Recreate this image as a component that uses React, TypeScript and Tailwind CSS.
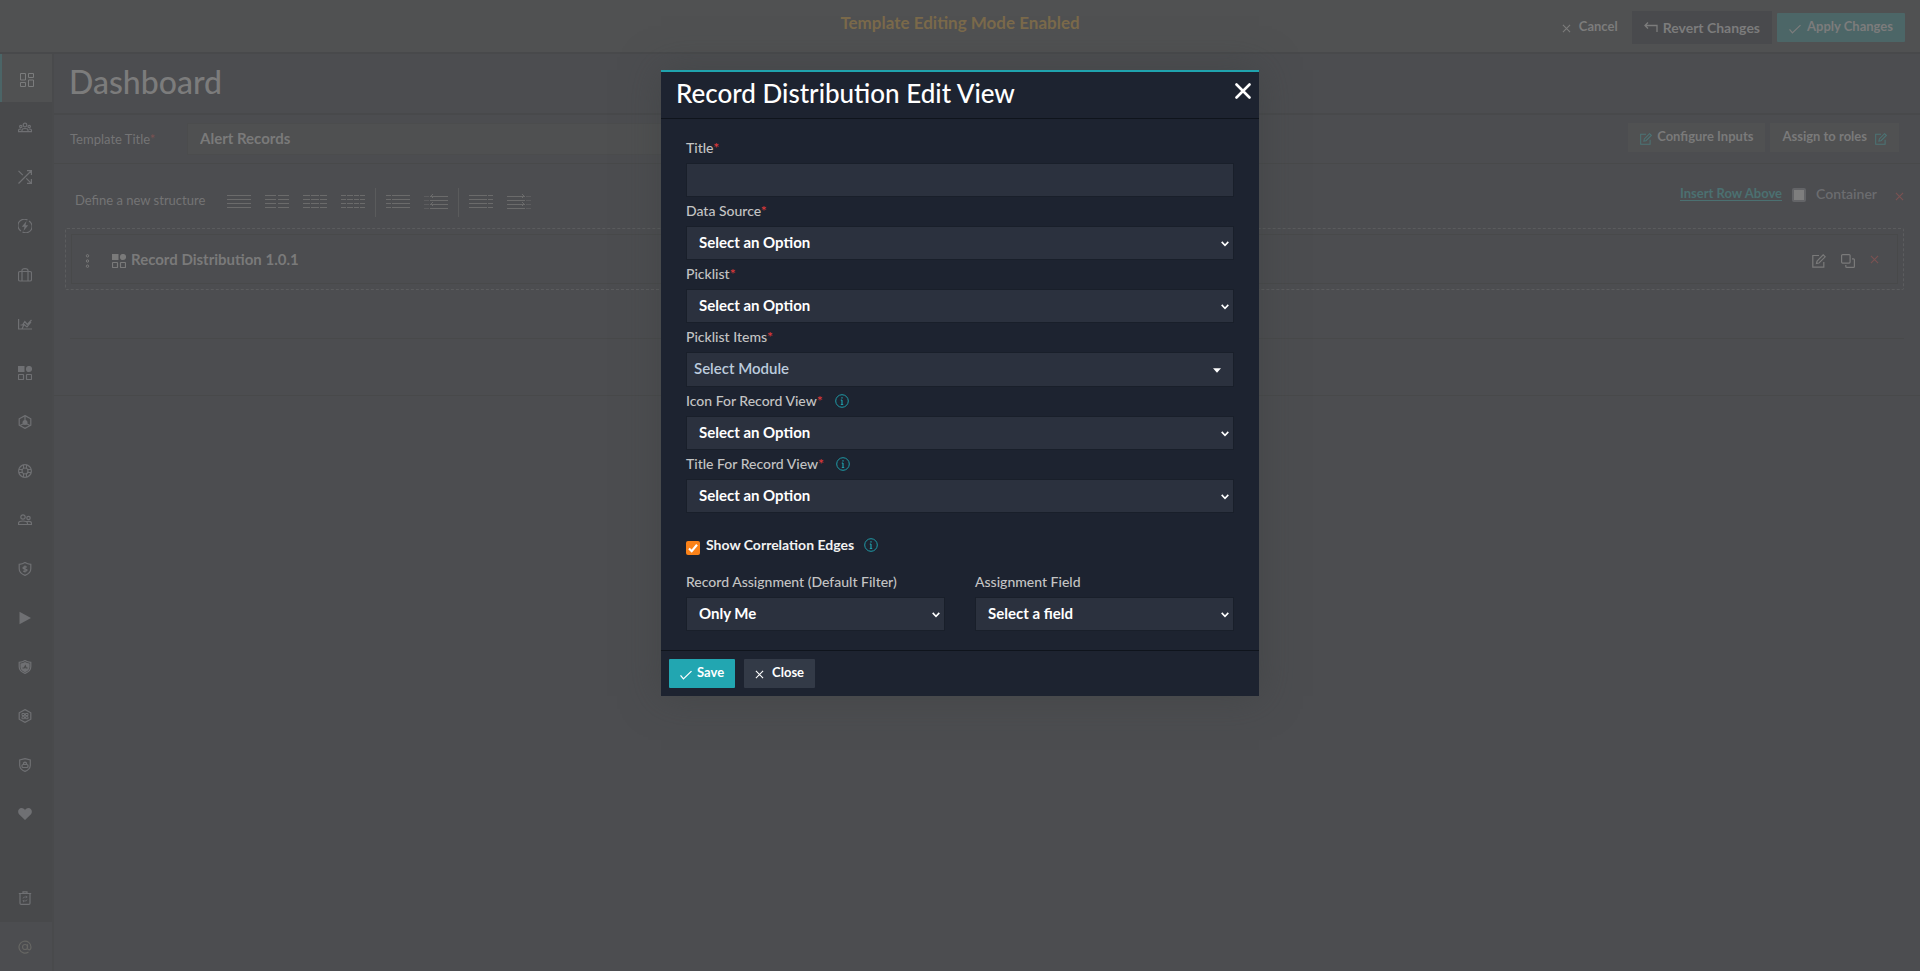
import type { ReactNode } from 'react';

type IconProps = { children: ReactNode; className?: string; size?: number; box?: number };

function Icon({ children, className = '', size = 14, box = 14 }: IconProps) {
  return (
    <svg
      width={size}
      height={size}
      viewBox={`0 0 ${box} ${box}`}
      fill="none"
      stroke="currentColor"
      strokeWidth="1.2"
      className={`shrink-0 ${className}`}
      aria-hidden="true"
    >
      {children}
    </svg>
  );
}

const hexagon = <path d="M7 .6 12.8 3.8v6.4L7 13.4 1.2 10.2V3.8Z" />;
const shield = <path d="M7 .6c1.7 1.1 3.6 1.7 5.8 1.8v4.4c0 3-2 5.2-5.8 6.6-3.8-1.4-5.8-3.6-5.8-6.6V2.400C3.400 2.300 5.300 1.700 7 .6Z" />;

const appsIcon = (
  <>
    <rect x="0" y="0" width="6.500" height="6" fill="currentColor" stroke="none" />
    <circle cx="11" cy="3" r="3.100" fill="currentColor" stroke="none" />
    <rect x=".5" y="8.500" width="5" height="5" rx=".5" />
    <rect x="8.500" y="8.500" width="5" height="5" rx=".5" />
  </>
);

const editIcon = (
  <>
    <path d="M7 1.500H.8v11.700h11V8" />
    <path d="m4.500 9.500.6-2.500L11.200.8l2 2L7 9Z" />
  </>
);

const crossIcon = <path d="m1 1 8 8M9 1 1 9" />;
const checkIcon = <path d="M.6 7.500 4 11.500 13.400 2.500" strokeWidth="1.500" />;

const navItems: { label: string; icon: ReactNode }[] = [
  {
    label: 'Teams',
    icon: (
      <>
        <circle cx="7" cy="4" r="1.800" />
        <circle cx="2.800" cy="5.500" r="1.200" />
        <circle cx="11.200" cy="5.500" r="1.200" />
        <path d="M4 10.500V9q0-1.500 3-1.500T10 9v1.500M.5 10.500V9.300q0-1.300 2.500-1.300M13.500 10.500V9.300q0-1.300-2.500-1.300M0 10.700h14" />
      </>
    ),
  },
  { label: 'Workflows', icon: <path d="M.5 13.500 13.300.8M9 .6h4.400V5M.5.8l4.300 4.300M8.300 8.300l5 5M9 13.400h4.400V9" /> },
  {
    label: 'Automation',
    icon: (
      <>
        <path d="M9.500 1.100A6.300 6.300 0 0 0 3 12M4.500 12.900A6.300 6.300 0 0 0 11 2" />
        <path d="M8.500 2 3.800 7.800h2.700L5.500 12 10.200 6.200H7.500Z" fill="currentColor" stroke="none" />
      </>
    ),
  },
  {
    label: 'Cases',
    icon: (
      <>
        <rect x=".5" y="3.500" width="13" height="9.500" rx="1.500" />
        <path d="M4 13V2.500Q4 .6 7 .6t3 1.900V13" />
      </>
    ),
  },
  { label: 'Reports', icon: <path d="M.6 2v10h13.400M2.500 8h2l2.300-3.500 2.500 3L13.500 3M4 12l2-4.500 3 2.500 4-5" /> },
  { label: 'Modules', icon: appsIcon },
  {
    label: 'Assets',
    icon: (
      <>
        {hexagon}
        <circle cx="7" cy="7.500" r="2.500" fill="currentColor" stroke="none" />
        <path d="M7 1v5M2 10.500l4-2M12 10.500l-4-2" />
      </>
    ),
  },
  {
    label: 'Help',
    icon: (
      <>
        <circle cx="7" cy="7" r="6.400" />
        <circle cx="7" cy="7" r="3" />
        <path strokeWidth="1" d="M5.500.8v3.500M8.500.8v3.500M5.500 13.200V9.700M8.500 13.200V9.700M.8 5.500h3.500M.8 8.500h3.500M13.200 5.500H9.700M13.200 8.500H9.700" />
      </>
    ),
  },
  {
    label: 'Users',
    icon: (
      <>
        <circle cx="5" cy="4" r="2.200" />
        <circle cx="10.500" cy="5" r="1.700" />
        <path d="M.5 11.500v-1Q.5 8 5 8t4.500 2.500v1ZM8.500 8.700q5-1 5 1.800v1h-4" />
      </>
    ),
  },
  {
    label: 'Billing',
    icon: (
      <>
        {shield}
        <path d="M8.800 5.200Q7 4 5.500 5.200T7 7t1.500 1.800T5.200 9M7 3.500v7" />
      </>
    ),
  },
  { label: 'Playbooks', icon: <path d="M1.500.8v12.400L13 7Z" fill="currentColor" stroke="none" /> },
  {
    label: 'Threats',
    icon: (
      <>
        {shield}
        <path d="M7 2c1.400.9 3 1.400 4.600 1.500v3.400c0 2.300-1.500 4-4.600 5.300-3.100-1.300-4.600-3-4.600-5.300V3.500C4 3.400 5.600 2.900 7 2Z" fill="currentColor" stroke="none" />
        <path d="M4.500 8h1.700L7.300 6l.8 2h1.500" stroke="#494a4b" />
      </>
    ),
  },
  {
    label: 'Queues',
    icon: (
      <>
        {hexagon}
        <path strokeWidth="1" d="M4 4.500h2.500v2H4ZM7.500 4.500H10v2H7.500ZM4 7.700h2.500v2H4ZM7.500 7.700H10v2H7.500Z" />
      </>
    ),
  },
  {
    label: 'Access',
    icon: (
      <>
        <path d="M7 .6 12.300 2v5.500Q12 11.500 7 13.400 2 11.500 1.700 7.500V2Z" />
        <rect x="4" y="6.500" width="6" height="3" rx="1" />
        <path d="M5.500 6.500V5Q7 3.500 8.500 5v1.500" />
      </>
    ),
  },
  {
    label: 'Favorites',
    icon: <path d="M7 13 1 7.200C-.8 5 .3 1 3.500 1 5.300 1 6.500 2 7 3.200 7.500 2 8.700 1 10.500 1c3.200 0 4.300 4 2.500 6.200Z" fill="currentColor" stroke="none" />,
  },
];

const structures: { label: string; lines: string; faint?: string; divider?: boolean }[] = [
  { label: 'One column', lines: 'M0 1h24M0 5h24M0 9h24M0 13h24' },
  { label: 'Two columns', lines: 'M0 1h11m2 0h11M0 5h11m2 0h11M0 9h11m2 0h11M0 13h11m2 0h11' },
  { label: 'Three columns', lines: 'M0 1h7m1 0h8m1 0h7M0 5h7m1 0h8m1 0h7M0 9h7m1 0h8m1 0h7M0 13h7m1 0h8m1 0h7' },
  { label: 'Four columns', lines: 'M0 1h5m1 0h6m1 0h5m1 0h5M0 5h5m1 0h6m1 0h5m1 0h5M0 9h5m1 0h6m1 0h5m1 0h5M0 13h5m1 0h6m1 0h5m1 0h5' },
  { label: 'Left sidebar', lines: 'M0 1h5m1 0h18M0 5h5m1 0h18M0 9h5m1 0h18M0 13h5m1 0h18', divider: true },
  { label: 'Collapsible left sidebar', lines: 'M6 2h18M6 6h18M6 10h18M6 14h18M9 0 7 2l2 2M9 8l-2 2 2 2', faint: 'M0 2h5M0 6h5M0 10h5M0 14h5' },
  { label: 'Right sidebar', lines: 'M0 1h18m1 0h5M0 5h18m1 0h5M0 9h18m1 0h5M0 13h18m1 0h5', divider: true },
  { label: 'Collapsible right sidebar', lines: 'M0 2h18M0 6h18M0 10h18M0 14h18M15 0l2 2-2 2M15 8l2 2-2 2', faint: 'M19 2h5M19 6h5M19 10h5M19 14h5' },
];

const fieldBox = 'w-full border border-[#191f2a] bg-[#2b313e] text-[15px] font-bold text-white';

function Required({ className = 'text-[#e63a3a]' }: { className?: string }) {
  return <span className={className}>*</span>;
}

function Info({ label }: { label: string }) {
  return (
    <button type="button" aria-label={label} className="flex text-[#1f9aa6]">
      <Icon>
        <circle cx="7" cy="7" r="6.300" strokeWidth="1" />
        <path d="M7 6v4.500M5.800 6.200H7M5.800 10.500h2.400" />
        <path d="M7 3.200v1.400" strokeWidth="1.400" />
      </Icon>
    </button>
  );
}

type SelectFieldProps = { id: string; label: string; value: string; required?: boolean; info?: boolean };

function SelectField({ id, label, value, required, info }: SelectFieldProps) {
  return (
    <div>
      <div className="flex h-[29px] items-center gap-3 pb-[2px]">
        <label htmlFor={id} className="text-sm font-medium text-[#c4c4c4]">
          {label}
          {required && <Required />}
        </label>
        {info && <Info label={`About ${label}`} />}
      </div>
      <div className="relative">
        <select id={id} className={`${fieldBox} block h-[34px] appearance-none pr-5 pb-[2px] pl-3`}>
          <option>{value}</option>
        </select>
        <svg
          width="8"
          height="6"
          viewBox="0 0 8 6"
          fill="none"
          stroke="currentColor"
          strokeWidth="1.6"
          className="pointer-events-none absolute top-[15px] right-[5px] text-white"
          aria-hidden="true"
        >
          <path d="m.7.900 3.300 3.500L7.300.900" />
        </svg>
      </div>
    </div>
  );
}

function Dialog() {
  return (
    <div className="absolute inset-x-0 top-[70px] z-10 flex justify-center">
      <form
        role="dialog"
        aria-labelledby="dialog-title"
        className="w-full max-w-[598px] border-t-2 border-[#1fa3ae] bg-[#1d2330] shadow-[0_0_36px_rgba(60,64,64,0.5)]"
      >
        <header className="flex h-[47px] items-start justify-between border-b border-[#0f141c] pt-[2px] pr-2 pl-[15px]">
          <h2 id="dialog-title" className="text-[26px] leading-[38px] font-medium text-white">
            Record Distribution Edit View
          </h2>
          <button type="button" aria-label="Close dialog" className="mt-[9px] text-white">
            <Icon size={16} box={16}>
              <path d="m1.500 1.500 13 13m0-13-13 13" strokeWidth="2.600" strokeLinecap="round" />
            </Icon>
          </button>
        </header>

        <div className="px-[25px] pt-[15px] pb-[19px]">
          <div>
            <div className="flex h-[29px] items-center pb-[2px]">
              <label htmlFor="title" className="text-sm font-medium text-[#c4c4c4]">
                Title
                <Required />
              </label>
            </div>
            <input id="title" type="text" className={`${fieldBox} block h-[34px] px-3 outline-none`} />
          </div>
          <SelectField id="data-source" label="Data Source" value="Select an Option" required />
          <SelectField id="picklist" label="Picklist" value="Select an Option" required />
          <div>
            <div className="flex h-[29px] items-center pb-[2px]">
              <label htmlFor="picklist-items" className="text-sm font-medium text-[#c4c4c4]">
                Picklist Items
                <Required />
              </label>
            </div>
            <button
              id="picklist-items"
              type="button"
              className="flex h-[35px] w-full items-center justify-between border border-[#191f2a] bg-[#2b313e] pr-3 pb-[3px] pl-[7px] text-[15px] font-semibold text-[#bccbdd]"
            >
              Select Module
              <svg width="8" height="5" viewBox="0 0 8 5" className="mt-1 text-white" aria-hidden="true">
                <path d="M0 .3h8L4 4.700Z" fill="currentColor" />
              </svg>
            </button>
          </div>
          <SelectField id="icon-view" label="Icon For Record View" value="Select an Option" required info />
          <SelectField id="title-view" label="Title For Record View" value="Select an Option" required info />

          <div className="mt-5 flex h-6 items-center">
            <label className="flex items-center text-sm font-bold text-[#f2f2f2]">
              <input type="checkbox" defaultChecked className="peer sr-only" />
              <span className="mt-[6px] mr-[6px] flex size-[14px] items-center justify-center rounded-[2px] bg-[#fa8219] text-white">
                <Icon size={10} box={10}>
                  <path d="m1 5.500 2.700 2.700L9 1.800" strokeWidth="2.200" />
                </Icon>
              </span>
              Show Correlation Edges
            </label>
            <span className="ml-[10px]">
              <Info label="About correlation edges" />
            </span>
          </div>

          <div className="mt-[11px] grid grid-cols-2 gap-[30px]">
            <SelectField id="assignment" label="Record Assignment (Default Filter)" value="Only Me" />
            <SelectField id="assignment-field" label="Assignment Field" value="Select a field" />
          </div>
        </div>

        <footer className="flex h-[46px] items-center gap-[9px] border-t border-[#0f141c] px-2">
          <button type="button" className="flex h-[29px] items-center gap-[5px] rounded-[1px] bg-[#22a6b1] px-[11px] pb-[2px] text-[13px] font-bold text-white">
            <Icon size={12} className="mt-1">{checkIcon}</Icon>
            Save
          </button>
          <button type="button" className="flex h-[29px] items-center gap-2 rounded-[1px] bg-[#333a47] px-[11px] pb-[2px] text-[13px] font-bold text-white">
            <Icon size={9} box={10} className="mt-1">{crossIcon}</Icon>
            Close
          </button>
        </footer>
      </form>
    </div>
  );
}

function TopBar() {
  return (
    <header className="grid h-[54px] grid-cols-[1fr_auto_1fr] items-start border-b-2 border-[#48494b] bg-[#505152]">
      <p className="col-start-2 pt-[10px] text-[17px] font-bold text-[#7b6a4b]">Template Editing Mode Enabled</p>
      <div className="flex items-center justify-end gap-[5px] pt-[11px] pr-[15px] text-[13px] font-bold text-[#7c7c7c]">
        <button type="button" className="mr-[9px] flex h-[29px] items-center gap-2 pb-[2px]">
          <Icon size={9} box={10} className="mt-1">{crossIcon}</Icon>
          Cancel
        </button>
        <button type="button" className="flex h-[33px] items-center gap-[5px] bg-[#494a4d] px-3 text-sm">
          <Icon size={14}>
            <path d="M1 4.500h12V11M4 1.500l-3 3 3 3" strokeWidth="1.300" />
          </Icon>
          Revert Changes
        </button>
        <button type="button" className="flex h-[29px] items-center gap-[6px] rounded-[1px] bg-[#4c6667] px-3 pb-[2px]">
          <Icon size={12} className="mt-1">{checkIcon}</Icon>
          Apply Changes
        </button>
      </div>
    </header>
  );
}

function Sidebar() {
  return (
    <nav aria-label="Main" className="flex w-[54px] shrink-0 flex-col border-r-2 border-[#494a4c] bg-[#48494b] text-[#6f7073]">
      <a href="#dashboard" aria-label="Dashboard" className="flex h-12 items-center justify-center border-l-2 border-[#4b6567] bg-[#505152] pt-[3px] text-[#7b7c7d]">
        <Icon>
          <path strokeWidth="1" d="M.5.5h5v6.500h-5ZM8.500.5h5v4h-5ZM8.500 7h5v6.500h-5ZM.5 9.500h5v4h-5Z" />
        </Icon>
      </a>
      {navItems.map((item) => (
        <a key={item.label} href={`#${item.label.toLowerCase()}`} aria-label={item.label} className="flex h-[49px] items-center justify-center pt-[3px] pr-[2px]">
          <Icon>{item.icon}</Icon>
        </a>
      ))}
      <a href="#trash" aria-label="Recycle bin" className="mt-auto flex h-[49px] items-center justify-center pr-[2px]">
        <Icon>
          <path d="M.8 2.500h12.400M5 2.500V.8h4v1.700M2 2.500v9.700q0 1.200 1.200 1.200h7.600q1.200 0 1.200-1.200V2.500" />
          <path d="M5 7.500q0-1.500 2-1.500h2M9 8.500q0 1.500-2 1.500H5M8 4.800 9.200 6 8 7.200M6 8.800 4.800 10 6 11.200" strokeWidth=".8" />
        </Icon>
      </a>
      <a href="#account" aria-label="Account" className="flex h-[49px] items-center justify-center bg-[#4c4d50] pr-[2px] text-[#666663]">
        <Icon>
          <circle cx="7" cy="7" r="2.500" />
          <path d="M9.500 4.300V8q0 1.800 1.700 1.800T13 7a6 6 0 1 0-2.500 5" />
        </Icon>
      </a>
    </nav>
  );
}

function Workspace() {
  return (
    <main className="min-w-0 flex-1">
      <h1 className="h-[61px] border-b-2 border-[#48494b] pl-[15px] text-[32px] leading-[56px] font-medium text-[#7c7c7c]">Dashboard</h1>

      <section className="flex h-[49px] items-start border-b border-[#48494a] pt-2 pr-[21px] pl-4">
        <label htmlFor="template-title" className="w-[117px] pt-[7px] text-[13px] text-[#747475]">
          Template Title
          <Required className="text-[#7b5252]" />
        </label>
        <input
          id="template-title"
          type="text"
          defaultValue="Alert Records"
          className="h-8 w-[1000px] min-w-0 border border-[#4b4c4d] bg-[#4f5051] px-3 pb-[2px] text-[15px] font-bold text-[#7a7a7a] outline-none"
        />
        <div className="ml-auto flex gap-[5px] text-[13px] font-bold text-[#7a7a7a]">
          <button type="button" className="flex h-[29px] items-center gap-[5px] bg-[#505152] px-3 pb-[2px]">
            <Icon size={12} className="mt-1 text-[#4b7475]">{editIcon}</Icon>
            Configure Inputs
          </button>
          <button type="button" className="flex h-[29px] items-center gap-2 bg-[#505152] px-3 pb-[2px]">
            Assign to roles
            <Icon size={12} className="mt-1 text-[#4b7475]">{editIcon}</Icon>
          </button>
        </div>
      </section>

      <section className="border-b border-[#48494a] pb-14">
        <div className="flex h-[64px] items-center pr-4 pl-[21px]">
          <span className="w-[152px] pt-[9px] text-[13px] text-[#747475]">Define a new structure</span>
          <div className="flex items-center gap-[14px] pt-3 text-[#6b6b6b]">
            {structures.map((s) => (
              <div key={s.label} className="flex items-center gap-[10px]">
                {s.divider && <span className="-ml-1 h-[29px] w-px bg-[#5a5b5c]" />}
                <button type="button" aria-label={s.label} className="flex">
                  <svg width="24" height="16" viewBox="0 0 24 16" fill="none" stroke="currentColor" shapeRendering="crispEdges" aria-hidden="true">
                    <path d={s.lines} />
                    {s.faint && <path d={s.faint} opacity=".5" />}
                  </svg>
                </button>
              </div>
            ))}
          </div>
          <div className="ml-auto flex items-center gap-[10px] pb-1 text-[13px] font-bold">
            <a href="#insert-row" className="text-[#4b7071] underline underline-offset-2">
              Insert Row Above
            </a>
            <label className="flex items-center gap-[10px] text-sm font-semibold text-[#6b6c6f]">
              <input type="checkbox" className="mt-[2px] size-[14px] appearance-none rounded-[2px] border-2 border-[#636467] bg-[#7e7e7e]" />
              Container
            </label>
            <button type="button" aria-label="Remove row" className="mt-1 ml-2 text-[#7b5252]">
              <Icon size={9} box={10}>{crossIcon}</Icon>
            </button>
          </div>
        </div>

        <div className="mr-4 ml-[11px] rounded-[2px] border border-dashed border-[#5b5c5e] p-[5px]">
          <div className="flex h-[50px] items-center border border-[#48494a] pr-[18px] pl-[13px] text-[#7a7a7a]">
            <button type="button" aria-label="Move widget" className="mt-1 flex">
              <svg width="5" height="14" viewBox="0 0 5 14" fill="none" stroke="currentColor" aria-hidden="true">
                <circle cx="2.500" cy="1.800" r="1.200" />
                <circle cx="2.500" cy="7" r="1.200" />
                <circle cx="2.500" cy="12.200" r="1.200" />
              </svg>
            </button>
            <Icon className="mt-1 ml-[22px]">{appsIcon}</Icon>
            <span className="ml-[5px] text-[15px] font-bold">Record Distribution 1.0.1</span>
            <div className="ml-auto flex items-center gap-[15px]">
              <button type="button" aria-label="Edit widget" className="mt-1">
                <Icon>{editIcon}</Icon>
              </button>
              <button type="button" aria-label="Duplicate widget" className="mt-1">
                <Icon>
                  <rect x=".6" y=".6" width="8.500" height="8.500" rx="1" />
                  <path d="M11 4.800h1.500q.9 0 .9.900v6.800q0 .9-.9.900H5.700q-.9 0-.9-.9V11" />
                </Icon>
              </button>
              <button type="button" aria-label="Delete widget" className="text-[#7b5252]">
                <Icon size={9} box={10}>{crossIcon}</Icon>
              </button>
            </div>
          </div>
        </div>

        <hr className="mt-12 mr-4 ml-4 border-[#48494a]" />
      </section>
    </main>
  );
}

export default function App() {
  return (
    <div className="relative flex min-h-screen flex-col bg-[#4c4d50] font-['Lato',sans-serif]">
      <TopBar />
      <div className="flex flex-1">
        <Sidebar />
        <Workspace />
      </div>
      <Dialog />
    </div>
  );
}
